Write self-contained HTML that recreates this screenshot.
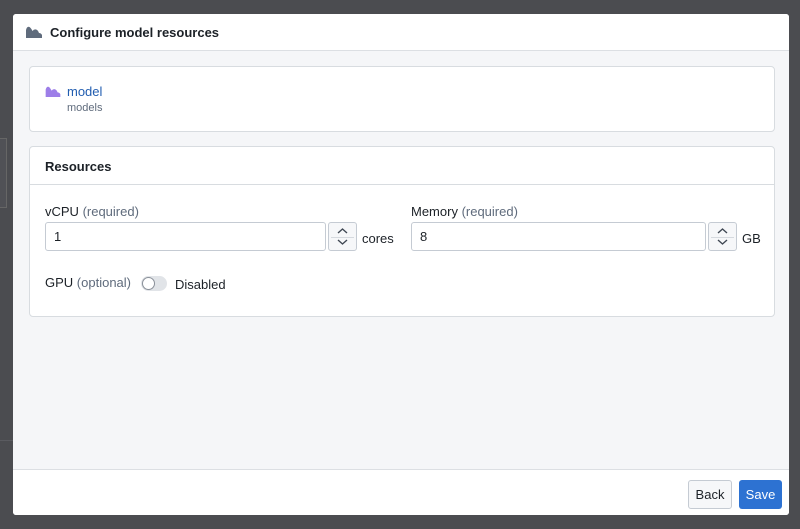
<!DOCTYPE html>
<html><head><style>
*{box-sizing:border-box;margin:0;padding:0}
body{width:800px;height:529px;background:#4b4c50;font-family:"Liberation Sans",sans-serif;position:relative;overflow:hidden;font-size:13px;color:#1c2127}
.bgl{position:absolute;left:0;top:138px;width:7px;height:70px;border:1px solid #666;border-left:none;background:#505156}
.bgline{position:absolute;left:0;top:440px;width:13px;height:1px;background:#5a5b60}
.modal{position:absolute;left:13px;top:14px;width:776px;height:501px;background:#f5f6f8;border-radius:3px;overflow:hidden}
.hdr{position:absolute;left:0;top:0;width:100%;height:37px;background:#fff;border-bottom:1px solid #dcdfe3;display:flex;align-items:center;padding-left:13px;font-weight:bold;font-size:13px}
.ftr{position:absolute;left:0;bottom:0;width:100%;height:46px;background:#fff;border-top:1px solid #dcdfe3}
.card{position:absolute;left:16px;width:746px;background:#fff;border:1px solid #d8dce0;border-radius:4px}
.btn{position:absolute;top:10px;height:29px;border-radius:3px;font-size:13px;display:flex;align-items:center;justify-content:center}
.inp{position:absolute;height:29px;border:1px solid #c5cbd3;border-radius:3px;padding-left:8px;display:flex;align-items:center;font-size:13px;background:#fff}
.spin{position:absolute;width:29px;height:29px;border:1px solid #c5cbd3;border-radius:3px;background:#f6f7f9}
.spin:after{content:"";position:absolute;left:2px;right:2px;top:14px;height:1px;background:#d5d9de}
.lbl{position:absolute;font-size:13px}
.lbl span{color:#5f6b7c}
</style></head><body>
<div class="bgl"></div><div class="bgline"></div>
<div class="modal">
 <div class="hdr"><svg width="16" height="12" viewBox="0 0 16 12" style="margin-right:8px"><path d="M0 12V4Q1 0 3.5 1Q5 2 6.5 5Q8 3 10 3.5Q12 4 13 7Q15 7 16 9V12Z" fill="#5f6b7c"/></svg>Configure model resources</div>
 <div class="card" style="top:52px;height:66px">
  <svg width="16" height="11" viewBox="0 0 16 12" style="position:absolute;left:15px;top:19px"><path d="M0 12V4Q1 0 3.5 1Q5 2 6.5 5Q8 3 10 3.5Q12 4 13 7Q15 7 16 9V12Z" fill="#9d7ee8"/></svg>
  <div style="position:absolute;left:37px;top:17px;color:#215db0;font-size:13px">model</div>
  <div style="position:absolute;left:37px;top:35px;color:#5f6b7c;font-size:11px">models</div>
 </div>
 <div class="card" style="top:132px;height:171px">
  <div style="height:38px;border-bottom:1px solid #d8dce0;padding:12px 0 0 15px;font-weight:bold">Resources</div>
  <div class="lbl" style="left:15px;top:57px">vCPU <span>(required)</span></div>
  <div class="inp" style="left:15px;top:75px;width:281px">1</div>
  <div class="spin" style="left:298px;top:75px"><svg width="29" height="29" viewBox="0 0 29 29" style="position:absolute;left:-1px;top:-1px"><path d="M10 11L14.5 7L19 11M10 18L14.5 22L19 18" fill="none" stroke="#404854" stroke-width="1.4"/></svg></div>
  <div class="lbl" style="left:332px;top:84px">cores</div>
  <div class="lbl" style="left:381px;top:57px">Memory <span>(required)</span></div>
  <div class="inp" style="left:381px;top:75px;width:295px">8</div>
  <div class="spin" style="left:678px;top:75px"><svg width="29" height="29" viewBox="0 0 29 29" style="position:absolute;left:-1px;top:-1px"><path d="M10 11L14.5 7L19 11M10 18L14.5 22L19 18" fill="none" stroke="#404854" stroke-width="1.4"/></svg></div>
  <div class="lbl" style="left:712px;top:84px">GB</div>
  <div class="lbl" style="left:15px;top:128px">GPU <span>(optional)</span></div>
  <div style="position:absolute;left:111px;top:129px;width:26px;height:15px;border-radius:8px;background:#e1e4e8"><div style="position:absolute;left:1px;top:1px;width:13px;height:13px;border-radius:50%;background:#fff;border:1px solid #8a9099"></div></div>
  <div class="lbl" style="left:145px;top:130px">Disabled</div>
 </div>
 <div class="ftr">
  <div class="btn" style="left:675px;width:44px;background:#f6f7f9;border:1px solid #c5cbd3">Back</div>
  <div class="btn" style="left:726px;width:43px;background:#2d72d2;color:#fff">Save</div>
 </div>
</div>
</body></html>
